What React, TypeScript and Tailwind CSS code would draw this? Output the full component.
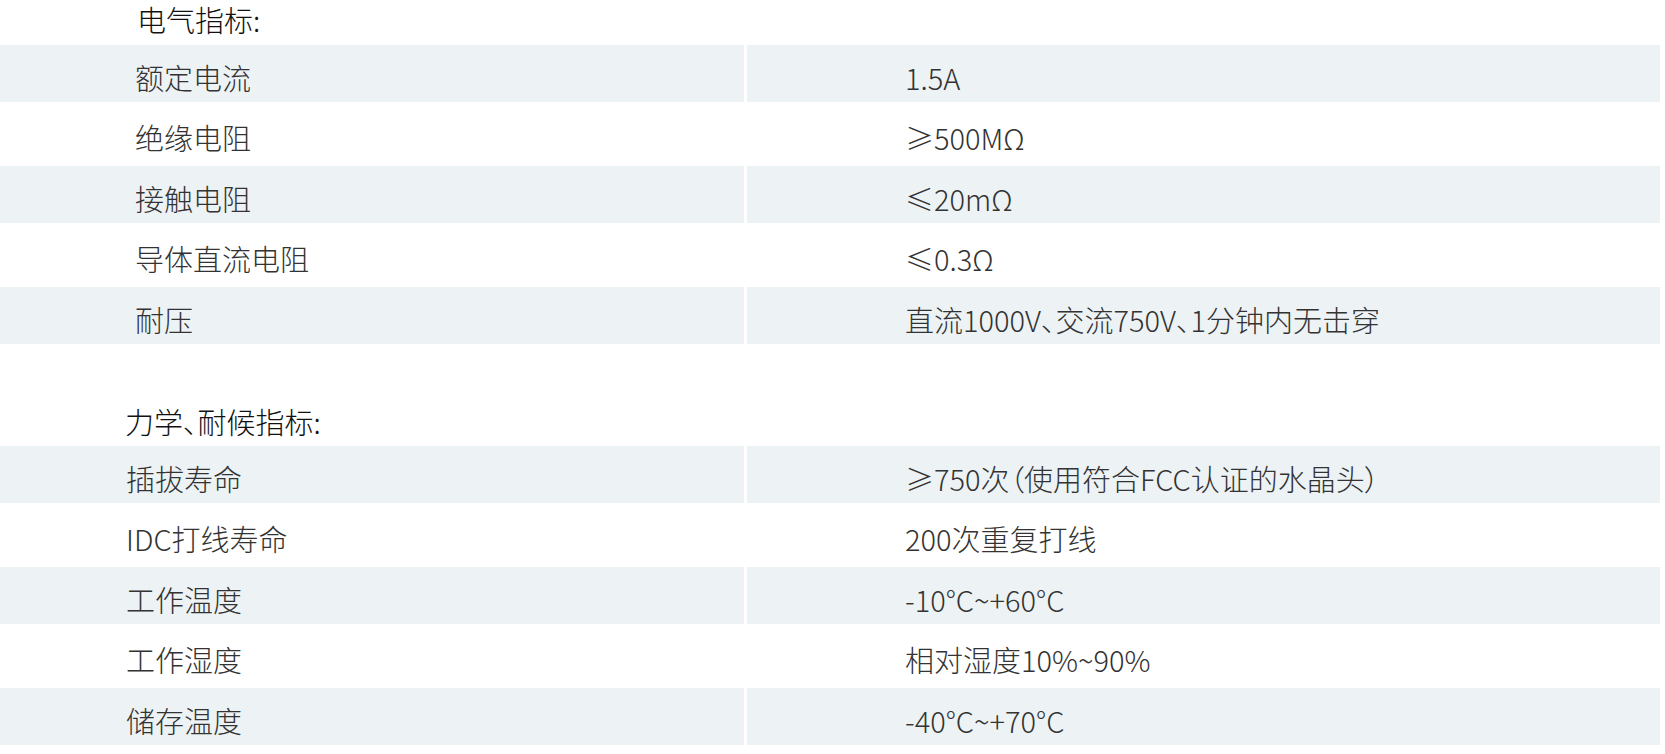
type Row = { label: string; value: string };

const electrical: Row[] = [
  { label: "额定电流", value: "1.5A" },
  { label: "绝缘电阻", value: "≥500MΩ" },
  { label: "接触电阻", value: "≤20mΩ" },
  { label: "导体直流电阻", value: "≤0.3Ω" },
  { label: "耐压", value: "直流1000V、交流750V、1分钟内无击穿" },
];

const mechanical: Row[] = [
  { label: "插拔寿命", value: "≥750次（使用符合FCC认证的水晶头）" },
  { label: "IDC打线寿命", value: "200次重复打线" },
  { label: "工作温度", value: "-10°C~+60°C" },
  { label: "工作湿度", value: "相对湿度10%~90%" },
  { label: "储存温度", value: "-40°C~+70°C" },
];

function SpecTable({ rows, labelPad }: { rows: Row[]; labelPad: string }) {
  return (
    <div className="flex flex-col">
      {rows.map((row, i) => {
        const shaded = i % 2 === 0;
        return (
          <div key={row.label} className={`flex ${shaded ? "h-[57px]" : "h-[64px]"}`}>
            <div
              className={`w-[744px] flex items-center pt-[8px] ${labelPad} ${shaded ? "bg-[#edf2f5]" : "bg-white"}`}
            >
              {row.label}
            </div>
            <div className="w-[3px] bg-white" />
            <div
              className={`flex-1 flex items-center pt-[8px] pl-[158px] [font-feature-settings:'palt'] ${shaded ? "bg-[#edf2f5]" : "bg-white"}`}
            >
              {row.value}
            </div>
          </div>
        );
      })}
    </div>
  );
}

export default function App() {
  return (
    <div
      className="w-[1660px] h-[754px] bg-white text-[29px] font-light text-[#333] overflow-hidden"
      style={{ fontFamily: '"Noto Sans CJK SC", "Noto Sans", sans-serif' }}
    >
      <div className="h-[45px] leading-[38px] pl-[137px] text-[#111] [font-feature-settings:'palt']">
        电气指标:
      </div>
      <SpecTable rows={electrical} labelPad="pl-[135px]" />
      <div className="mt-[57px] h-[45px] pt-[1px] leading-[38px] pl-[125px] text-[#111] [font-feature-settings:'palt']">
        力学、耐候指标:
      </div>
      <SpecTable rows={mechanical} labelPad="pl-[126px]" />
    </div>
  );
}
